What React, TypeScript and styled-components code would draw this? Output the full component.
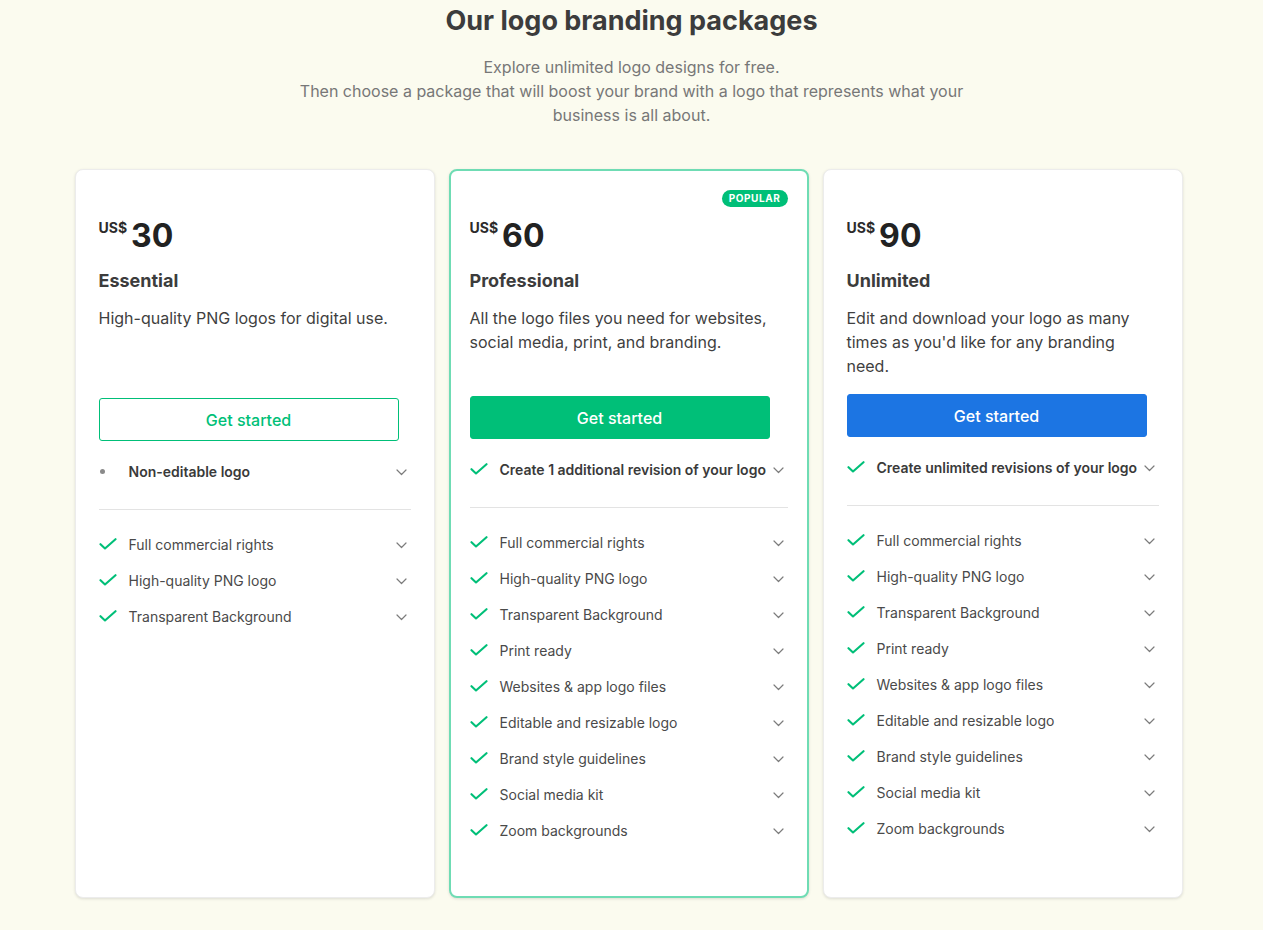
import React from "react";
import styled, { createGlobalStyle } from "styled-components";

const GlobalStyle = createGlobalStyle`
  html, body { margin: 0; padding: 0; }
  body {
    background: #fbfbef;
    font-family: Inter, "Noto Sans", "Liberation Sans", sans-serif;
    color: #3b3b3b;
    -webkit-font-smoothing: antialiased;
  }
  * { box-sizing: border-box; }
`;

const Page = styled.div`
  padding-top: 3px;
  padding-bottom: 40px;
`;

const Title = styled.h1`
  margin: 0;
  text-align: center;
  font-size: 27px;
  line-height: 36px;
  font-weight: 700;
  color: #3c3c3c;
`;

const Subtitle = styled.p`
  margin: 16px auto 0;
  max-width: 680px;
  text-align: center;
  font-size: 16px;
  line-height: 24px;
  color: #777777;
`;

const Cards = styled.div`
  margin-top: 42px;
  padding-right: 6px;
  display: flex;
  justify-content: center;
  align-items: stretch;
  gap: 14px;
`;

const Card = styled.div<{ $popular?: boolean }>`
  position: relative;
  width: 360px;
  background: #ffffff;
  border-radius: 8px;
  border: ${(p) => (p.$popular ? "2px solid #6fdcb4" : "1px solid #ececec")};
  box-shadow: 0 1px 3px rgba(0, 0, 0, 0.12);
  padding: ${(p) => (p.$popular ? "45px 19px 48px" : "46px 23px 48px")};
  display: flex;
  flex-direction: column;
`;

const Badge = styled.span`
  position: absolute;
  top: 19px;
  right: 19px;
  height: 17px;
  padding: 0 7px;
  border-radius: 9px;
  background: #00bf78;
  color: #ffffff;
  font-size: 10px;
  font-weight: 700;
  letter-spacing: 0.6px;
  line-height: 17px;
`;

const PriceRow = styled.div`
  display: flex;
  align-items: flex-start;
  gap: 4px;
  height: 40px;
`;

const Currency = styled.span`
  margin-top: 5px;
  font-size: 14px;
  line-height: 14px;
  font-weight: 700;
  color: #2b2b2b;
`;

const Amount = styled.span`
  font-size: 32px;
  line-height: 40px;
  font-weight: 700;
  color: #222222;
`;

const PlanName = styled.h2`
  margin: 13px 0 0;
  font-size: 18px;
  line-height: 24px;
  font-weight: 700;
  color: #3c3c3c;
`;

const Description = styled.p`
  margin: 13px 0 0;
  min-height: 72px;
  font-size: 16px;
  line-height: 24px;
  color: #3f3f3f;
`;

type Variant = "outline" | "green" | "blue";

const Button = styled.button<{ $variant: Variant; $gap: number }>`
  margin-top: ${(p) => p.$gap}px;
  width: 300px;
  height: 43px;
  border-radius: 3px;
  font-family: inherit;
  font-size: 16px;
  font-weight: 500;
  cursor: pointer;
  border: 1px solid
    ${(p) => (p.$variant === "blue" ? "#1c75e3" : "#00bf78")};
  background: ${(p) =>
    p.$variant === "outline" ? "#ffffff" : p.$variant === "blue" ? "#1c75e3" : "#00bf78"};
  color: ${(p) => (p.$variant === "outline" ? "#00bf78" : "#ffffff")};
`;

const KeyRow = styled.div`
  margin-top: 12px;
`;

const Divider = styled.hr`
  margin: 20px 0 16px;
  border: 0;
  border-top: 1px solid #e3e3e3;
  height: 0;
`;

const Row = styled.div<{ $strong?: boolean }>`
  display: flex;
  align-items: center;
  height: 36px;
  font-size: 14px;
  font-weight: ${(p) => (p.$strong ? 600 : 400)};
  color: ${(p) => (p.$strong ? "#3a3a3a" : "#4a4a4a")};
`;

const IconCell = styled.span`
  width: 30px;
  flex: 0 0 30px;
  display: flex;
  align-items: center;
`;

const Dot = styled.span`
  margin-left: 1px;
  width: 5px;
  height: 5px;
  border-radius: 50%;
  background: #8a8a8a;
`;

const Label = styled.span`
  flex: 1;
  white-space: nowrap;
`;

const ChevronCell = styled.span`
  flex: 0 0 auto;
  display: flex;
  align-items: center;
  margin: 3px 4px 0 6px;
`;

const Check = () => (
  <svg width="18" height="12" viewBox="0 0 18 12" fill="none">
    <path
      d="M1.5 6.2 L6 10.5 L16.5 1.2"
      stroke="#00bf78"
      strokeWidth="2.1"
      strokeLinecap="round"
      strokeLinejoin="round"
    />
  </svg>
);

const Chevron = () => (
  <svg width="11" height="7" viewBox="0 0 11 7" fill="none">
    <path d="M1 1 L5.5 5.5 L10 1" stroke="#7c7c7c" strokeWidth="1.2" strokeLinecap="round" strokeLinejoin="round" />
  </svg>
);

const FeatureRow: React.FC<{ label: string; strong?: boolean; dot?: boolean }> = ({
  label,
  strong,
  dot,
}) => (
  <Row $strong={strong}>
    <IconCell>{dot ? <Dot /> : <Check />}</IconCell>
    <Label>{label}</Label>
    <ChevronCell>
      <Chevron />
    </ChevronCell>
  </Row>
);

const allFeatures = [
  "Full commercial rights",
  "High-quality PNG logo",
  "Transparent Background",
  "Print ready",
  "Websites & app logo files",
  "Editable and resizable logo",
  "Brand style guidelines",
  "Social media kit",
  "Zoom backgrounds",
];

type Plan = {
  price: string;
  name: string;
  desc: string;
  variant: Variant;
  gap: number;
  key: string;
  keyDot?: boolean;
  features: string[];
  popular?: boolean;
};

const plans: Plan[] = [
  {
    price: "30",
    name: "Essential",
    desc: "High-quality PNG logos for digital use.",
    variant: "outline",
    gap: 20,
    key: "Non-editable logo",
    keyDot: true,
    features: allFeatures.slice(0, 3),
  },
  {
    price: "60",
    name: "Professional",
    desc: "All the logo files you need for websites, social media, print, and branding.",
    variant: "green",
    gap: 18,
    key: "Create 1 additional revision of your logo",
    features: allFeatures,
    popular: true,
  },
  {
    price: "90",
    name: "Unlimited",
    desc: "Edit and download your logo as many times as you'd like for any branding need.",
    variant: "blue",
    gap: 16,
    key: "Create unlimited revisions of your logo",
    features: allFeatures,
  },
];

export default function App() {
  return (
    <Page>
      <GlobalStyle />
      <Title>Our logo branding packages</Title>
      <Subtitle>
        Explore unlimited logo designs for free.
        <br />
        Then choose a package that will boost your brand with a logo that represents what your
        business is all about.
      </Subtitle>
      <Cards>
        {plans.map((p) => (
          <Card key={p.name} $popular={p.popular}>
            {p.popular && <Badge>POPULAR</Badge>}
            <PriceRow>
              <Currency>US$</Currency>
              <Amount>{p.price}</Amount>
            </PriceRow>
            <PlanName>{p.name}</PlanName>
            <Description>{p.desc}</Description>
            <Button $variant={p.variant} $gap={p.gap}>
              Get started
            </Button>
            <KeyRow>
              <FeatureRow label={p.key} strong dot={p.keyDot} />
            </KeyRow>
            <Divider />
            {p.features.map((f) => (
              <FeatureRow key={f} label={f} />
            ))}
          </Card>
        ))}
      </Cards>
    </Page>
  );
}
